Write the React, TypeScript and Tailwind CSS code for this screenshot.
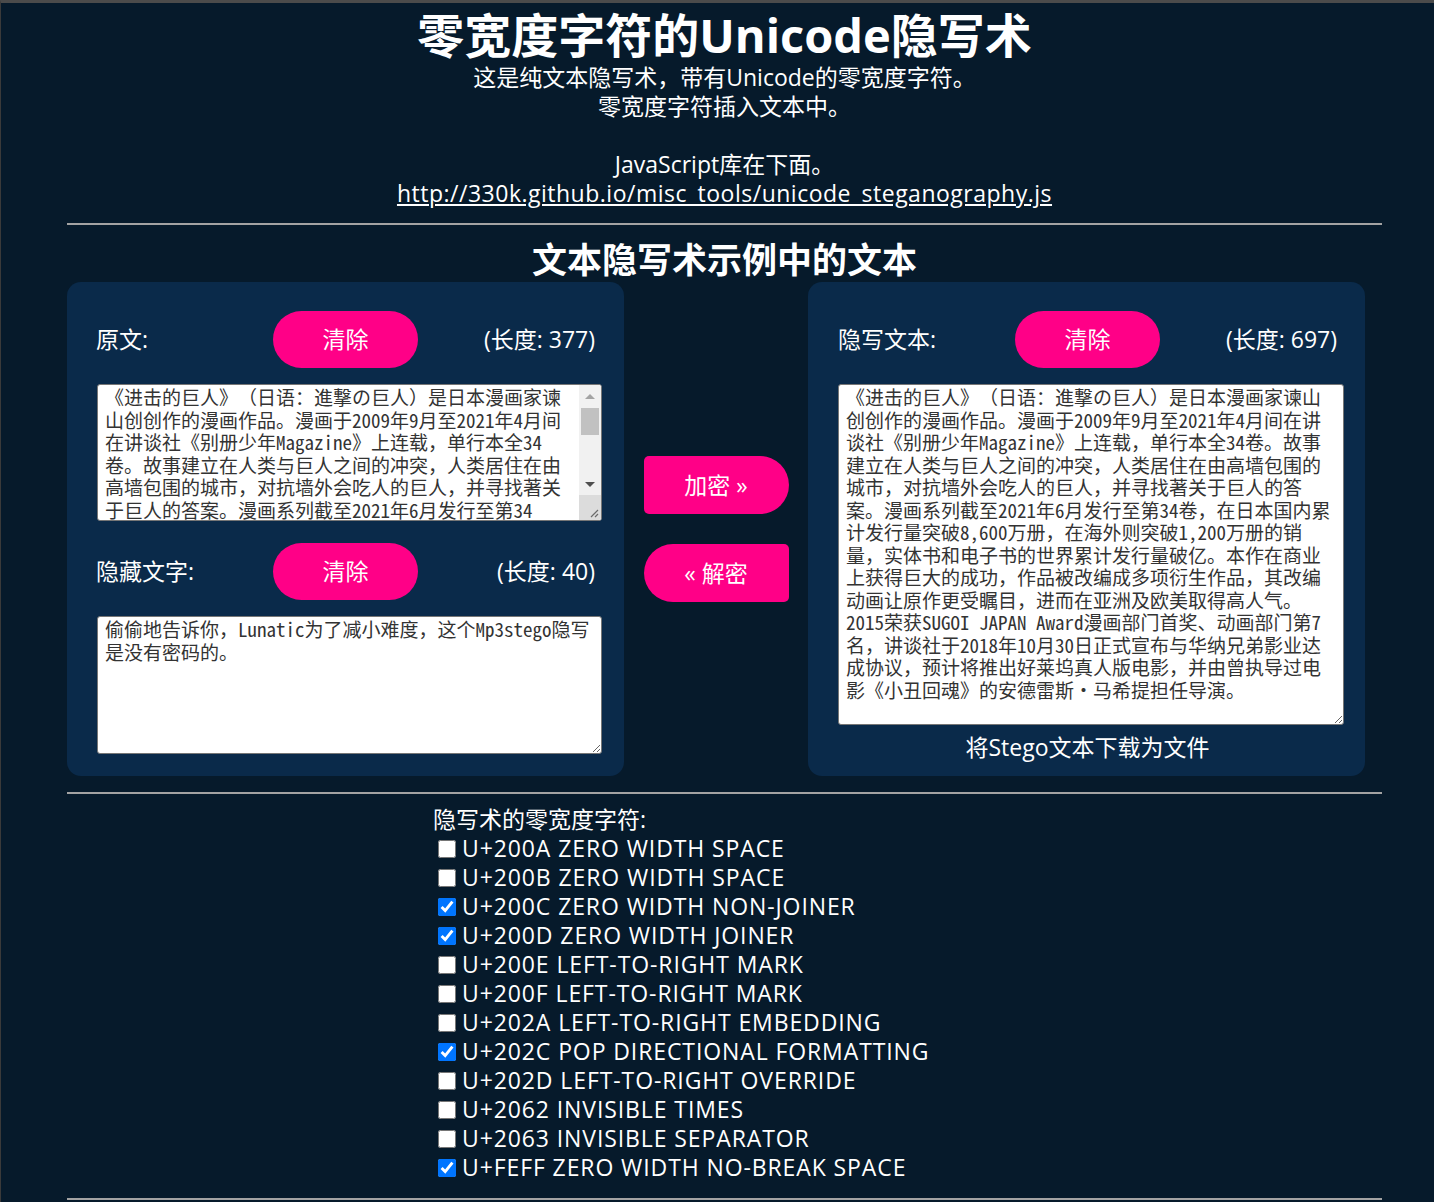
import { useState } from "react"

const story =
  "《进击的巨人》（日语：進撃の巨人）是日本漫画家谏山创创作的漫画作品。漫画于2009年9月至2021年4月间在讲谈社《别册少年Magazine》上连载，单行本全34卷。故事建立在人类与巨人之间的冲突，人类居住在由高墙包围的城市，对抗墙外会吃人的巨人，并寻找著关于巨人的答案。漫画系列截至2021年6月发行至第34卷，在日本国内累计发行量突破8,600万册，在海外则突破1,200万册的销量，实体书和电子书的世界累计发行量破亿。本作在商业上获得巨大的成功，作品被改编成多项衍生作品，其改编动画让原作更受瞩目，进而在亚洲及欧美取得高人气。2015荣获SUGOI JAPAN Award漫画部门首奖、动画部门第7名，讲谈社于2018年10月30日正式宣布与华纳兄弟影业达成协议，预计将推出好莱坞真人版电影，并由曾执导过电影《小丑回魂》的安德雷斯・马希提担任导演。"

const hidden = "偷偷地告诉你，Lunatic为了减小难度，这个Mp3stego隐写是没有密码的。"

const chars = [
  { label: "U+200A ZERO WIDTH SPACE", on: false },
  { label: "U+200B ZERO WIDTH SPACE", on: false },
  { label: "U+200C ZERO WIDTH NON-JOINER", on: true },
  { label: "U+200D ZERO WIDTH JOINER", on: true },
  { label: "U+200E LEFT-TO-RIGHT MARK", on: false },
  { label: "U+200F LEFT-TO-RIGHT MARK", on: false },
  { label: "U+202A LEFT-TO-RIGHT EMBEDDING", on: false },
  { label: "U+202C POP DIRECTIONAL FORMATTING", on: true },
  { label: "U+202D LEFT-TO-RIGHT OVERRIDE", on: false },
  { label: "U+2062 INVISIBLE TIMES", on: false },
  { label: "U+2063 INVISIBLE SEPARATOR", on: false },
  { label: "U+FEFF ZERO WIDTH NO-BREAK SPACE", on: true },
]

const fontArea =
  "text-[#333] text-[19px] leading-[22.5px] [text-spacing-trim:space-all] font-['Noto_Sans_Mono_CJK_SC','Noto_Sans_CJK_SC',monospace]"

const areaCls = `block bg-white border border-[#767676] rounded-[3px] pl-[7px] py-[1px] ${fontArea}`

function Grip() {
  return (
    <svg width="10" height="10" viewBox="0 0 10 10" className="absolute right-[2px] bottom-[2px]">
      <path d="M9 2 L2 9 M9 6 L6 9" stroke="#6b6b6b" strokeWidth="1.2" />
    </svg>
  )
}

function LabelRow({ label, length }: { label: string; length: number }) {
  return (
    <div className="grid grid-cols-3 items-center w-[499px] h-[57px]">
      <span>{label}</span>
      <button className="justify-self-center w-[145px] h-[57px] rounded-full bg-[#ff0087] text-white">
        清除
      </button>
      <span className="justify-self-end">(长度: {length})</span>
    </div>
  )
}

export default function App() {
  const [checks, setChecks] = useState(chars.map((c) => c.on))

  return (
    <div className="min-h-screen bg-[#061a2b] border-t-[3px] border-t-[#4b4b4b] border-l border-l-[#3a3a3a] text-white text-[23px] leading-[29px] font-['Open_Sans','Noto_Sans_CJK_SC',sans-serif]">
      <div className="ml-[66px] w-[1315px]">
        <h1 className="text-center font-bold text-[47px] leading-[56px] pt-[4px]">
          零宽度字符的Unicode隐写术
        </h1>
        <p className="text-center">
          这是纯文本隐写术，带有Unicode的零宽度字符。
          <br />
          零宽度字符插入文本中。
          <br />
          <br />
          JavaScript库在下面。
          <br />
          <a className="underline tracking-[0.5px]" href="#">
            http://330k.github.io/misc_tools/unicode_steganography.js
          </a>
        </p>

        <hr className="mt-[15px] h-[2px] border-0 bg-[#a3a3a3]" />

        <h2 className="mt-[13px] text-center font-bold text-[35px] leading-[44px]">
          文本隐写术示例中的文本
        </h2>

        <div className="grid grid-cols-[557px_184px_557px]">
          {/* left: original + hidden */}
          <div className="h-[494px] rounded-[14px] bg-[#0a2a4a] pl-[29px] pt-[29px]">
            <LabelRow label="原文:" length={377} />
            <div className="mt-[16px] ml-[1px] flex w-[505px] h-[137px] overflow-hidden bg-white border border-[#767676] rounded-[3px]">
              <textarea
                readOnly
                value={story}
                className={`flex-1 resize-none overflow-hidden outline-none pl-[7px] pr-[9px] py-[1px] ${fontArea}`}
              />
              {/* scrollbar */}
              <div className="flex flex-col w-[22px] bg-[#f1f1f1]">
                <div className="h-[22px] flex items-center justify-center">
                  <span className="w-0 h-0 border-x-[5px] border-x-transparent border-b-[5px] border-b-[#a3a3a3]" />
                </div>
                <div className="flex-1 px-[2px] pt-[1px]">
                  <div className="h-[27px] bg-[#c1c1c1]" />
                </div>
                <div className="h-[22px] flex items-center justify-center">
                  <span className="w-0 h-0 border-x-[5px] border-x-transparent border-t-[5px] border-t-[#505050]" />
                </div>
                <div className="relative h-[25px] bg-[#dcdcdc]">
                  <Grip />
                </div>
              </div>
            </div>
            <div className="mt-[22px]">
              <LabelRow label="隐藏文字:" length={40} />
            </div>
            <textarea
              readOnly
              value={hidden}
              className={`${areaCls} pr-[3px] mt-[16px] ml-[1px] w-[505px] h-[138px]`}
            />
          </div>

          <div className="flex flex-col items-center justify-center gap-[30px]">
            <button className="w-[145px] h-[58px] rounded-l-[5px] rounded-r-[29px] bg-[#ff0087] text-white">
              加密 »
            </button>
            <button className="w-[145px] h-[58px] rounded-l-[29px] rounded-r-[5px] bg-[#ff0087] text-white">
              « 解密
            </button>
          </div>

          {/* right: stego text */}
          <div className="h-[494px] rounded-[14px] bg-[#0a2a4a] pl-[30px] pt-[29px]">
            <LabelRow label="隐写文本:" length={697} />
            <textarea
              readOnly
              value={story}
              className={`${areaCls} pr-[7px] mt-[16px] w-[506px] h-[341px]`}
            />
            <div className="mt-[8px] w-[499px] text-center">将Stego文本下载为文件</div>
          </div>
        </div>

        <hr className="mt-[16px] h-[2px] border-0 bg-[#a3a3a3]" />

        <div className="mt-[11px] ml-[366px]">
          <div>隐写术的零宽度字符:</div>
          {chars.map((c, i) => (
            <label key={c.label} className="flex items-center h-[29px]">
              <input
                type="checkbox"
                checked={checks[i]}
                onChange={() => setChecks(checks.map((v, j) => (j === i ? !v : v)))}
                className="ml-[5px] mr-[6px] w-[18px] h-[18px]"
              />
              <span className="tracking-[0.9px]">{c.label}</span>
            </label>
          ))}
        </div>

        <hr className="mt-[16px] h-[2px] border-0 bg-[#a3a3a3]" />
      </div>
    </div>
  )
}
